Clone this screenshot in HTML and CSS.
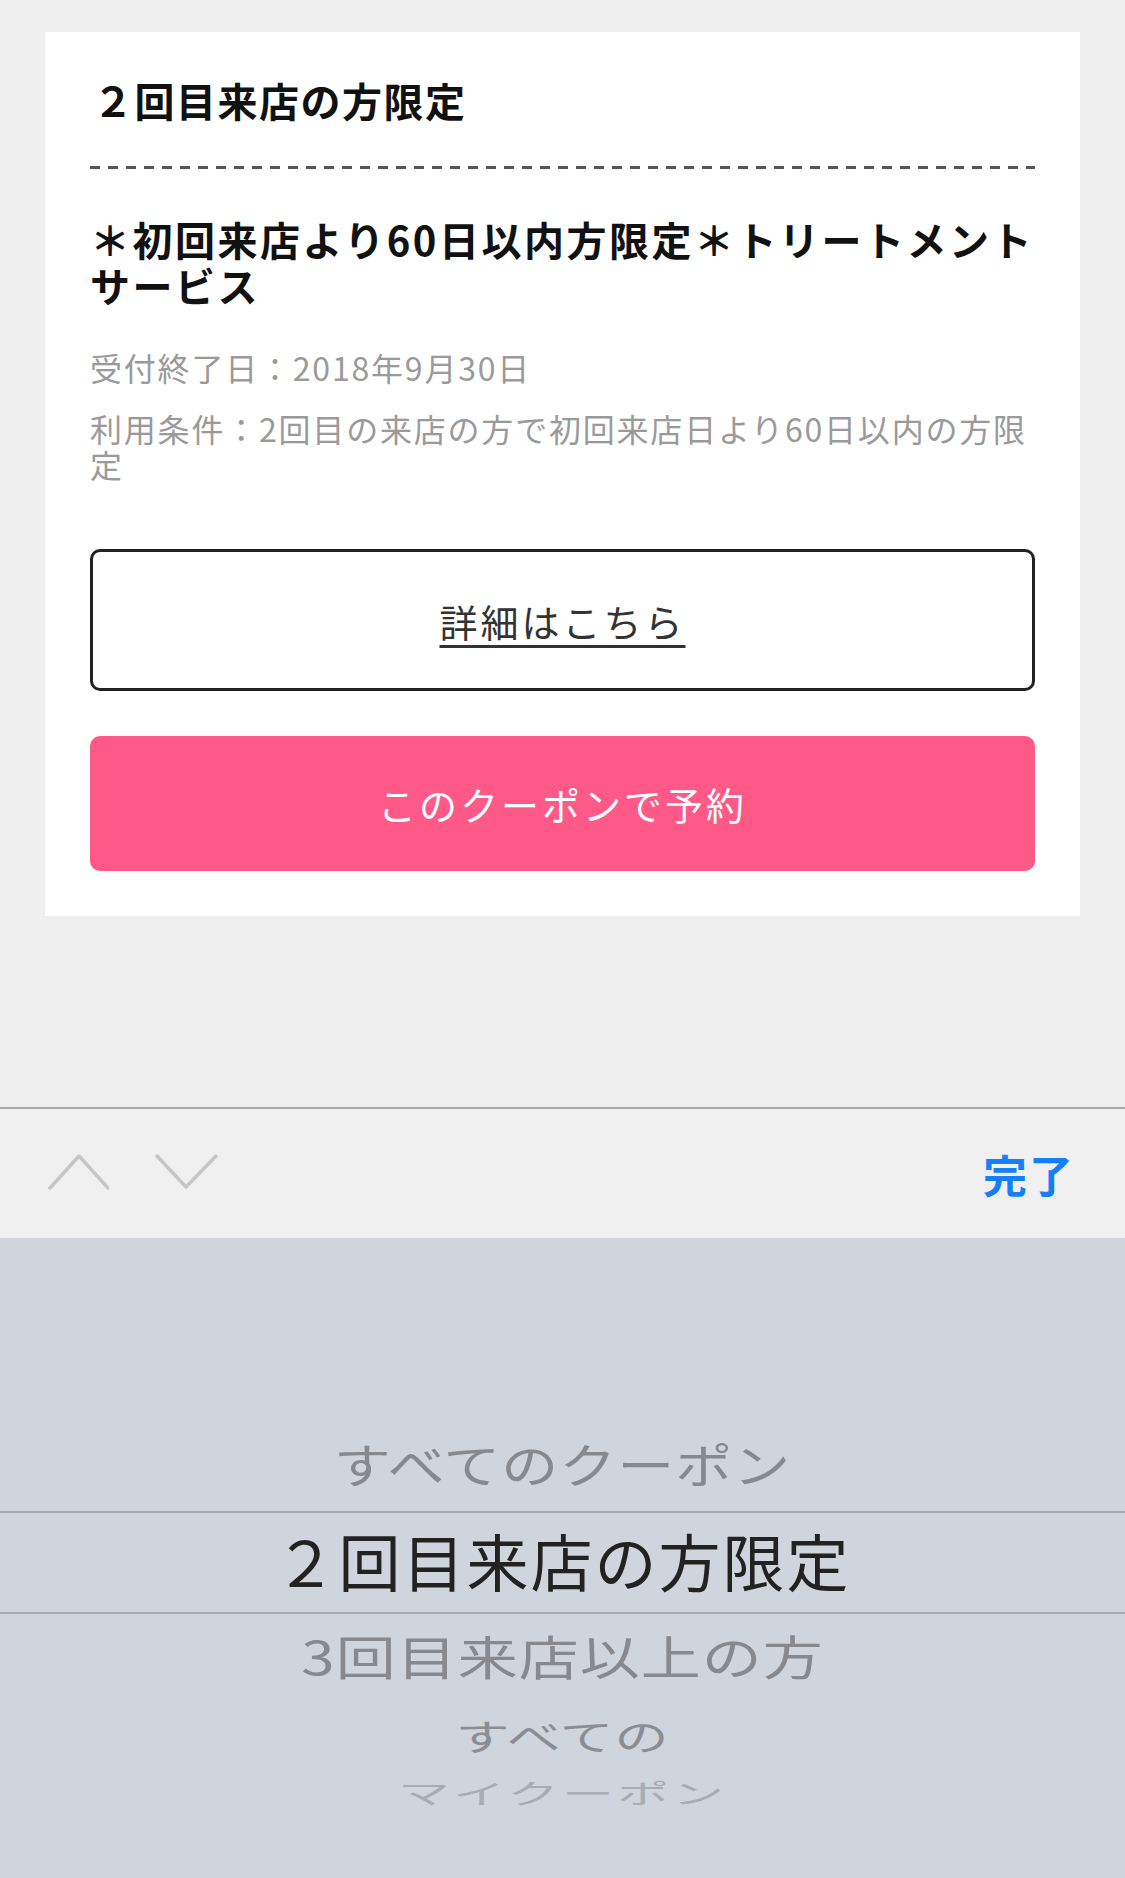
FILE: index.html
```html
<!DOCTYPE html>
<html lang="ja">
<head>
  <meta charset="UTF-8">
  <meta name="viewport" content="width=device-width, initial-scale=1.0">
  <title>クーポン</title>
  <link rel="stylesheet" href="styles.css">
</head>
<body>
  <div class="page">
    <div class="coupon-card">
      <h2 class="coupon-label">２回目来店の方限定</h2>
      <div class="dash-line"></div>
      <h3 class="coupon-name">＊初回来店より60日以内方限定＊トリートメントサービス</h3>
      <p class="coupon-info">受付終了日：2018年9月30日</p>
      <p class="coupon-info">利用条件：2回目の来店の方で初回来店日より60日以内の方限定</p>
      <a class="btn-detail" href="#"><span>詳細はこちら</span></a>
      <a class="btn-reserve" href="#">このクーポンで予約</a>
    </div>
  </div>

  <div class="toolbar">
    <div class="arrows">
      <svg width="64" height="40" viewBox="0 0 64 40"><polyline points="5,36 34,4 63,36" fill="none" stroke="#c6c6c8" stroke-width="3.5" stroke-linecap="round" stroke-linejoin="round"/></svg>
      <svg width="66" height="40" viewBox="0 0 66 40"><polyline points="3,4 32,35 62,4" fill="none" stroke="#c6c6c8" stroke-width="3.5" stroke-linecap="round" stroke-linejoin="round"/></svg>
    </div>
    <span class="done">完了</span>
  </div>

  <div class="picker">
    <div class="picker-row row-1"><span>すべてのクーポン</span></div>
    <div class="picker-row row-selected"><span>２回目来店の方限定</span></div>
    <div class="picker-row row-3"><span>3回目来店以上の方</span></div>
    <div class="picker-row row-4"><span>すべての</span></div>
    <div class="picker-row row-5"><span>マイクーポン</span></div>
  </div>
</body>
</html>
```

FILE: styles.css
```css
body {
  margin: 0;
  padding: 0;
  background-color: #efefef;
  font-family: "Noto Sans CJK JP", "Noto Sans", sans-serif;
  color: #111;
}

.page {
  height: 1107px;
  padding: 32px 45px 0;
  box-sizing: border-box;
}

.coupon-card {
  background: white;
  padding: 43px 45px 45px;
}

.coupon-label {
  margin: 0 0 41px;
  font-size: 40px;
  line-height: 50px;
  letter-spacing: 1.5px;
  font-weight: bold;
  padding-left: 3px;
}

.dash-line {
  height: 3px;
  background: repeating-linear-gradient(to right, #555 0, #555 10px, transparent 10px, transparent 18px);
  margin-bottom: 47px;
}

.coupon-name {
  margin: 0 0 41px;
  font-size: 40px;
  line-height: 46px;
  letter-spacing: 2.5px;
  font-weight: bold;
}

.coupon-info {
  margin: 0 0 25px;
  font-size: 32px;
  line-height: 36px;
  letter-spacing: 1.8px;
  color: #9a9a9a;
}

.coupon-info:last-of-type {
  margin-bottom: 67px;
}

.btn-detail {
  display: flex;
  justify-content: center;
  align-items: center;
  height: 142px;
  box-sizing: border-box;
  border: 3px solid #222;
  border-radius: 10px;
  color: #333;
  font-size: 38px;
  letter-spacing: 3px;
  margin-bottom: 45px;
  text-decoration: none;
}

.btn-detail span {
  text-decoration: underline;
  text-decoration-thickness: 3px;
  text-underline-offset: 8px;
}

.btn-reserve {
  display: flex;
  justify-content: center;
  align-items: center;
  height: 135px;
  border-radius: 10px;
  background-color: #ff5a87;
  color: white;
  font-size: 38px;
  letter-spacing: 3px;
  text-decoration: none;
}

.toolbar {
  height: 131px;
  border-top: 2px solid #a9a9a9;
  background-color: #f0f0f1;
  display: flex;
  justify-content: space-between;
  align-items: center;
  padding: 0 50px 0 45px;
  box-sizing: border-box;
}

.arrows {
  display: flex;
  gap: 45px;
  align-items: center;
  margin-top: -4px;
}

.done {
  color: #157efb;
  font-weight: bold;
  font-size: 44px;
  letter-spacing: 2px;
}

.picker {
  height: 640px;
  background-color: #d0d4dd;
  padding-top: 192px;
  box-sizing: border-box;
  text-align: center;
}

.picker-row span {
  display: inline-block;
}

.row-1 {
  height: 81px;
  line-height: 81px;
  font-size: 57px;
  letter-spacing: 1px;
  color: #88898e;
}

.row-1 span {
  transform: translateY(-8px) scaleY(0.82);
}

.row-selected {
  height: 99px;
  line-height: 104px;
  border-top: 2px solid #a7aab2;
  border-bottom: 2px solid #a7aab2;
  font-size: 62px;
  letter-spacing: 2px;
  color: #222;
}

.row-selected span {
  transform: translateY(-5px);
}

.row-3 {
  height: 94px;
  line-height: 94px;
  font-size: 60px;
  letter-spacing: 1px;
  color: #88898e;
}

.row-3 span {
  transform: translateY(-6px) scaleY(0.78);
}

.row-4 {
  height: 62px;
  line-height: 62px;
  font-size: 54px;
  letter-spacing: 1px;
  color: #8c8d93;
}

.row-4 span {
  transform: translateY(-4px) scaleY(0.68);
}

.row-5 {
  height: 52px;
  line-height: 52px;
  font-size: 52px;
  letter-spacing: 3px;
  color: #a9acb3;
}

.row-5 span {
  transform: translateY(-3px) scaleY(0.52);
}
```
